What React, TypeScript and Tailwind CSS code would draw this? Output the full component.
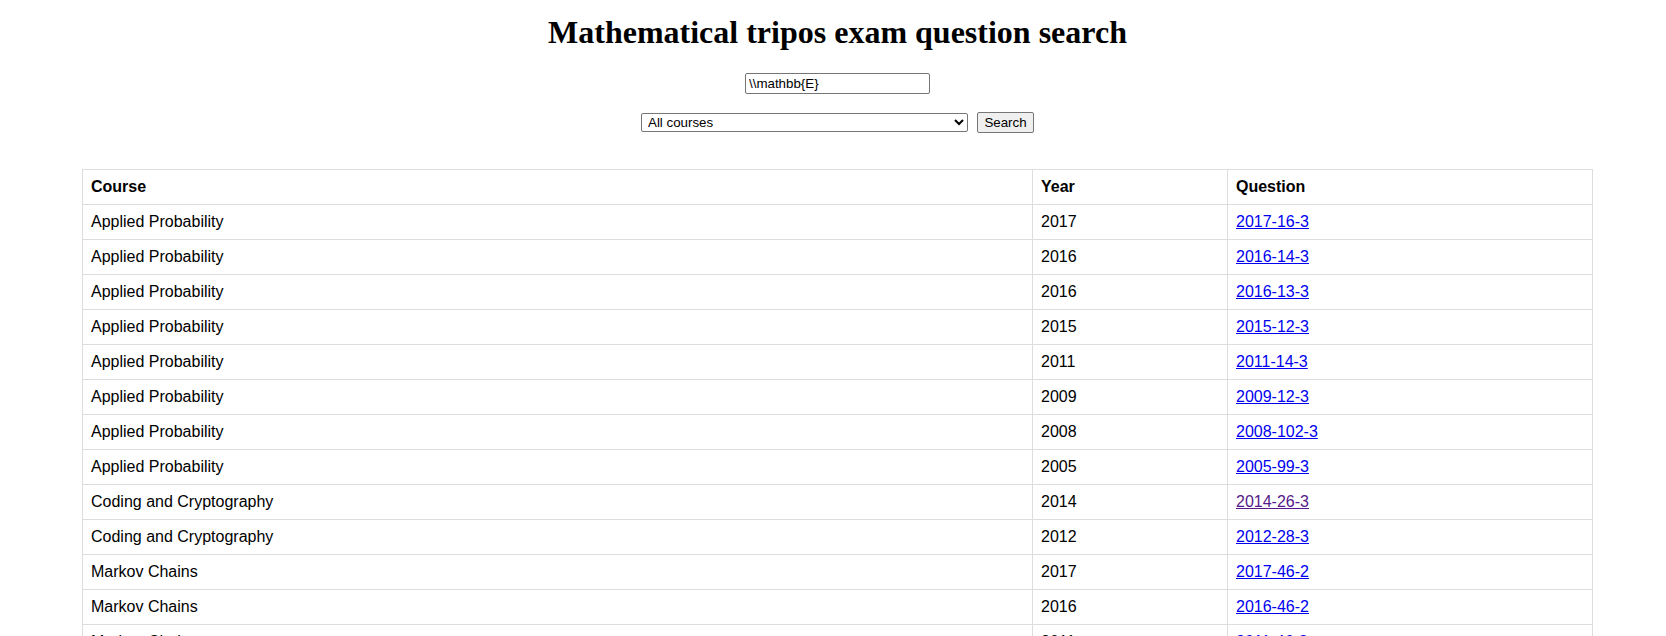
import React, { useState } from 'react';

type Row = {
  course: string;
  year: number;
  question: string;
  visited?: boolean;
};

const rows: Row[] = [
  { course: 'Applied Probability', year: 2017, question: '2017-16-3' },
  { course: 'Applied Probability', year: 2016, question: '2016-14-3' },
  { course: 'Applied Probability', year: 2016, question: '2016-13-3' },
  { course: 'Applied Probability', year: 2015, question: '2015-12-3' },
  { course: 'Applied Probability', year: 2011, question: '2011-14-3' },
  { course: 'Applied Probability', year: 2009, question: '2009-12-3' },
  { course: 'Applied Probability', year: 2008, question: '2008-102-3' },
  { course: 'Applied Probability', year: 2005, question: '2005-99-3' },
  { course: 'Coding and Cryptography', year: 2014, question: '2014-26-3', visited: true },
  { course: 'Coding and Cryptography', year: 2012, question: '2012-28-3' },
  { course: 'Markov Chains', year: 2017, question: '2017-46-2' },
  { course: 'Markov Chains', year: 2016, question: '2016-46-2' },
  { course: 'Markov Chains', year: 2011, question: '2011-46-2' },
  { course: 'Markov Chains', year: 2010, question: '2010-45-2' },
  { course: 'Probability', year: 2015, question: '2015-3-1' },
];

const courses = ['All courses', 'Applied Probability', 'Coding and Cryptography', 'Markov Chains', 'Probability'];

const App: React.FC = () => {
  const [query, setQuery] = useState('\\\\mathbb{E}');
  const [course, setCourse] = useState('All courses');

  return (
    <div className="min-h-screen bg-white text-black font-['Liberation_Sans',Arial,sans-serif]">
      <div className="flex flex-col items-center pl-[9px]">
        <h1 className="mt-[14px] text-[32px] leading-[37px] font-bold font-['Liberation_Serif','Times_New_Roman',serif]">
          Mathematical tripos exam question search
        </h1>

        {/* Search form */}
        <input
          type="text"
          value={query}
          onChange={(e) => setQuery(e.target.value)}
          className="mt-[22px] w-[185px] h-[21px] px-[3px] border border-[#767676] rounded-[2px] bg-white text-[13.33px] leading-[16px] outline-none"
        />
        <div className="mt-[18px] flex items-center gap-[9px]">
          <select
            value={course}
            onChange={(e) => setCourse(e.target.value)}
            className="w-[327px] h-[19px] pl-[2px] border border-[#767676] rounded-[2px] bg-white text-[13.33px] leading-[15px]"
          >
            {courses.map(c => (
              <option key={c} value={c}>{c}</option>
            ))}
          </select>
          <button className="w-[57px] h-[21px] border border-[#767676] rounded-[2px] bg-[#efefef] text-[13.33px] leading-[15px]">
            Search
          </button>
        </div>
      </div>

      {/* Results */}
      <table className="mt-[36px] ml-[82px] w-[1510px] table-fixed border-collapse text-[16px] leading-[18px]">
        <colgroup>
          <col className="w-[950px]" />
          <col className="w-[195px]" />
          <col className="w-[365px]" />
        </colgroup>
        <thead>
          <tr>
            <th className="border border-[#ddd] p-2 text-left font-bold">Course</th>
            <th className="border border-[#ddd] p-2 text-left font-bold">Year</th>
            <th className="border border-[#ddd] p-2 text-left font-bold">Question</th>
          </tr>
        </thead>
        <tbody>
          {rows.map((row, i) => (
            <tr key={i}>
              <td className="border border-[#ddd] p-2">{row.course}</td>
              <td className="border border-[#ddd] p-2">{row.year}</td>
              <td className="border border-[#ddd] p-2">
                <a
                  href="#"
                  className={row.visited ? 'text-[#551a8b] underline' : 'text-[#0000ee] underline'}
                >
                  {row.question}
                </a>
              </td>
            </tr>
          ))}
        </tbody>
      </table>
    </div>
  );
};

export default App;
